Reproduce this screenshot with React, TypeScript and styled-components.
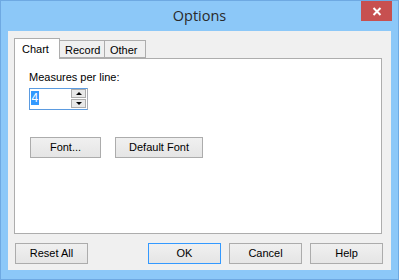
import React from 'react';
import styled, { createGlobalStyle } from 'styled-components';

const GlobalStyle = createGlobalStyle`
  html, body {
    margin: 0;
    padding: 0;
    background: #ffffff;
  }
  * {
    box-sizing: border-box;
  }
`

const Window = styled.div`
  width: 399px;
  height: 280px;
  display: flex;
  flex-direction: column;
  background: #8cc8f8;
  border: 1px solid #6ea9e2;
  padding: 0 7px 9px 7px;
  font-family: "Liberation Sans", Arial, sans-serif;
  font-size: 11px;
  color: #000;
`

const TitleBar = styled.div`
  height: 30px;
  display: grid;
  grid-template-columns: 1fr auto 1fr;
  align-items: start;
`

const Title = styled.div`
  grid-column: 2;
  padding-top: 5px;
  font-family: "Open Sans", "Noto Sans", sans-serif;
  font-size: 14.5px;
  color: #2a2a2a;
`

const CloseButton = styled.div`
  grid-column: 3;
  justify-self: end;
  width: 31px;
  height: 20px;
  margin-right: -1px;
  background: #c75050;
  display: flex;
  align-items: center;
  justify-content: center;
`

const Client = styled.div`
  flex: 1;
  display: flex;
  flex-direction: column;
  background: #f0f0f0;
  padding: 7px 9px 6px 6px;
`

const TabStrip = styled.div`
  display: flex;
  align-items: flex-end;
  height: 20px;
`

const Tab = styled.div<{ $active?: boolean; $w: number }>`
  position: relative;
  z-index: ${p => (p.$active ? 2 : 1)};
  width: ${p => p.$w}px;
  height: ${p => (p.$active ? 21 : 18)}px;
  margin-bottom: ${p => (p.$active ? -1 : 0)}px;
  margin-left: ${p => (p.$active ? 0 : -1)}px;
  border: 1px solid #adadad;
  border-bottom: ${p => (p.$active ? 'none' : '1px solid #adadad')};
  background: ${p => (p.$active ? '#ffffff' : '#f0f0f0')};
  padding: ${p => (p.$active ? '4px 0 0 7px' : '3px 0 0 5px')};
  &:first-child {
    margin-left: 0;
  }
`

const Panel = styled.div`
  height: 176px;
  background: #ffffff;
  border: 1px solid #adadad;
  padding: 12px 14px 0 14px;
  display: flex;
  flex-direction: column;
  align-items: flex-start;
`

const Label = styled.div`
  line-height: 13px;
`

const SpinBox = styled.div`
  margin-top: 4px;
  width: 59px;
  height: 22px;
  display: flex;
  border: 1px solid #5b9be0;
  border-right-color: #abadb3;
`

const SpinText = styled.div`
  flex: 1;
  padding: 2px 0 0 1px;
  font-size: 12px;
`

const Selected = styled.span`
  background: #3399ff;
  color: #ffffff;
  padding: 0 0.5px;
  line-height: 11px;
`

const SpinButtons = styled.div`
  width: 16px;
  display: flex;
  flex-direction: column;
  gap: 1px;
  padding: 0 1px 1px 0;
`

const SpinButton = styled.div`
  flex: 1;
  background: #e8e8e8;
  border: 1px solid #acacac;
  display: flex;
  align-items: center;
  justify-content: center;
`

const Arrow = styled.div<{ $down?: boolean }>`
  width: 0;
  height: 0;
  border-left: 3px solid transparent;
  border-right: 3px solid transparent;
  ${p => (p.$down ? 'border-top: 3px solid #000;' : 'border-bottom: 3px solid #000;')}
`

const FontRow = styled.div`
  margin-top: 27px;
  margin-left: 1px;
  display: flex;
  gap: 14px;
`

const Button = styled.div<{ $w: number; $default?: boolean }>`
  width: ${p => p.$w}px;
  height: 21px;
  border: 1px solid ${p => (p.$default ? '#3399ff' : '#acacac')};
  background: linear-gradient(#f0f0f0, #e5e5e5);
  display: flex;
  align-items: center;
  justify-content: center;
  padding-bottom: 1px;
`

const BottomRow = styled.div`
  margin-top: 9px;
  padding-left: 1px;
  margin-right: -1px;
  display: flex;
  justify-content: space-between;
`

const ButtonGroup = styled.div`
  display: flex;
  gap: 8px;
`

export default function App() {
  return (
    <>
      <GlobalStyle />
      <Window>
        <TitleBar>
          <Title>Options</Title>
          <CloseButton>
            <svg width="10" height="9" viewBox="0 0 10 9">
              <path d="M1.5 1 L8.5 8 M8.5 1 L1.5 8" stroke="#fff" strokeWidth="2" />
            </svg>
          </CloseButton>
        </TitleBar>
        <Client>
          <TabStrip>
            <Tab $active $w={46}>Chart</Tab>
            <Tab $w={46}>Record</Tab>
            <Tab $w={42}>Other</Tab>
          </TabStrip>
          <Panel>
            <Label>Measures per line:</Label>
            <SpinBox>
              <SpinText><Selected>4</Selected></SpinText>
              <SpinButtons>
                <SpinButton><Arrow /></SpinButton>
                <SpinButton><Arrow $down /></SpinButton>
              </SpinButtons>
            </SpinBox>
            <FontRow>
              <Button $w={71}>Font...</Button>
              <Button $w={88}>Default Font</Button>
            </FontRow>
          </Panel>
          <BottomRow>
            <Button $w={73}>Reset All</Button>
            <ButtonGroup>
              <Button $w={73} $default>OK</Button>
              <Button $w={73}>Cancel</Button>
              <Button $w={73}>Help</Button>
            </ButtonGroup>
          </BottomRow>
        </Client>
      </Window>
    </>
  );
}
